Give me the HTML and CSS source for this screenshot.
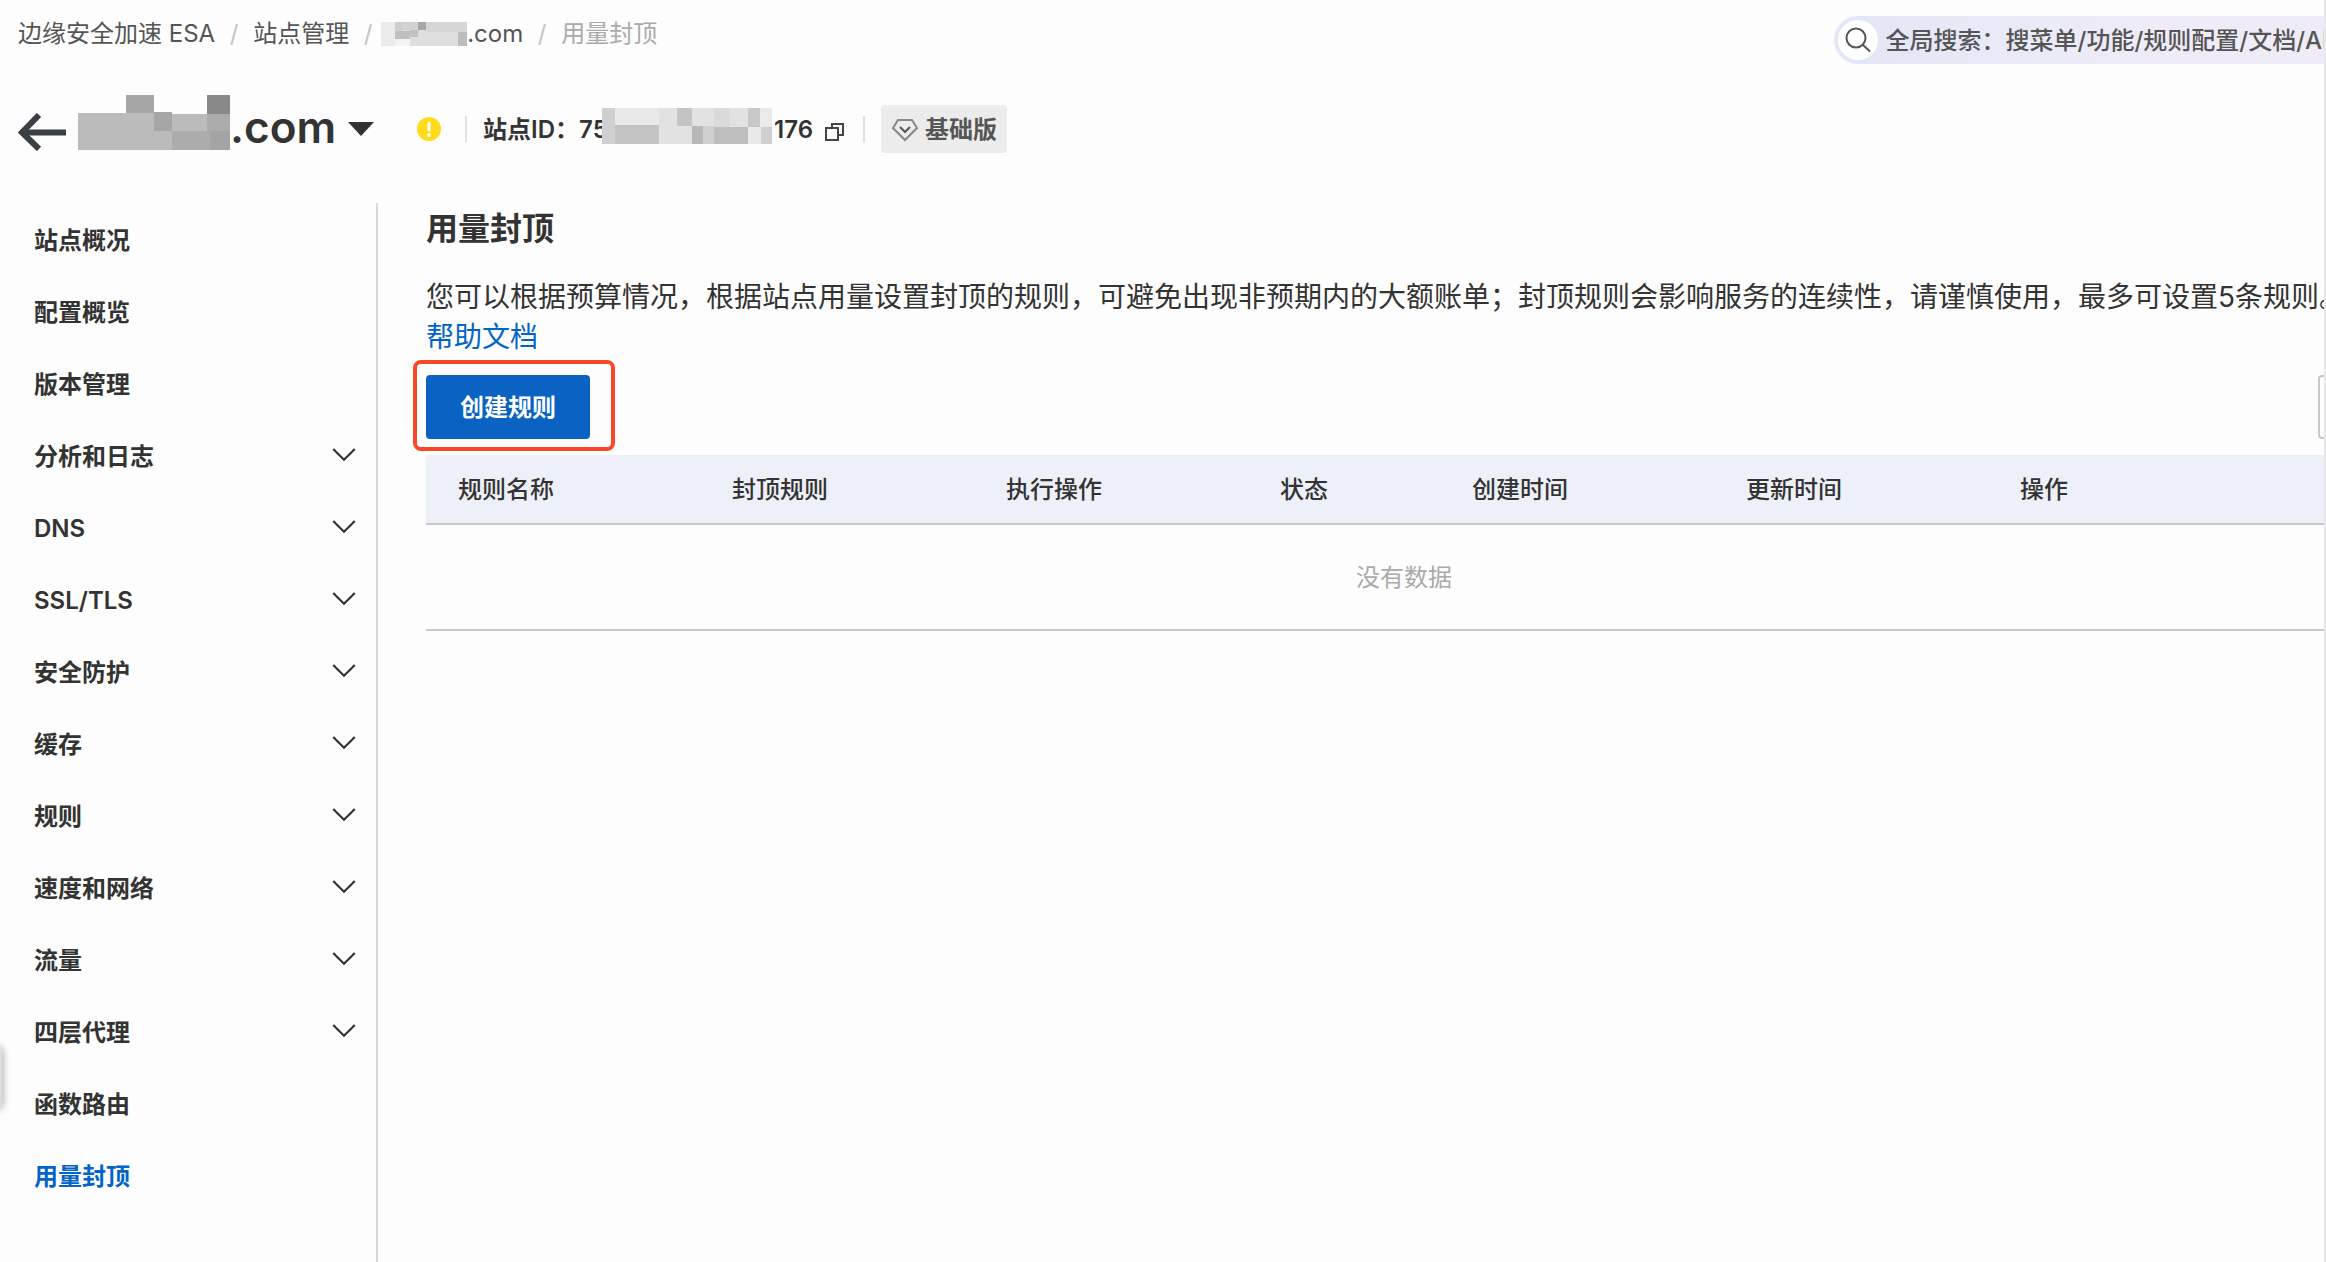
FILE: index.html
```html
<!DOCTYPE html>
<html lang="zh-CN">
<head>
<meta charset="utf-8">
<title>用量封顶</title>
<link rel="stylesheet" href="styles.css">
</head>
<body>
<div class="page">
  <header class="topbar">
    <nav class="breadcrumb" aria-label="面包屑">
      <a href="#">边缘安全加速 ESA</a>
      <span class="slash">/</span>
      <a href="#">站点管理</a>
      <span class="slash">/</span>
      <a href="#" class="masked"><svg width="86" height="24" viewBox="0 0 86 24" shape-rendering="crispEdges" aria-hidden="true"><rect width="86" height="24" fill="#dedede"/><rect width="14" height="24" fill="#ebebeb"/><rect x="14" width="7" height="9" fill="#cdcdcd"/><rect x="21" width="16" height="8" fill="#d2d2d2"/><rect x="37" width="8" height="8" fill="#a6a6a6"/><rect x="45" width="41" height="10" fill="#d6d6d6"/><rect x="14" y="9" width="15" height="8" fill="#bfbfbf"/><rect x="29" y="8" width="8" height="7" fill="#c2c2c2"/><rect x="14" y="17" width="15" height="7" fill="#f4f4f4"/><rect x="77" y="10" width="9" height="14" fill="#bdbdbd"/></svg>.com</a>
      <span class="slash">/</span>
      <span class="current" aria-current="page">用量封顶</span>
    </nav>
    <button type="button" class="search">
      <span class="search-icon"><svg width="26" height="26" viewBox="0 0 26 26" fill="none" stroke="#555" stroke-width="2"><circle cx="11" cy="11" r="9.5"/><path d="M17.5 17.5 25 24.5"/></svg></span>
      <span class="search-label">全局搜索：搜菜单/功能/规则配置/文档/API</span>
    </button>
  </header>

  <div class="site-head">
    <a href="#" class="back" aria-label="返回"><svg width="48" height="38" viewBox="0 0 48 38" fill="none" stroke="#3a4045" stroke-width="6"><path d="M3 19.500H48"/><path d="M21 2 4 19.500 21 36"/></svg></a>
    <button type="button" class="site-name">
      <svg width="152" height="55" viewBox="0 0 152 55" shape-rendering="crispEdges" aria-hidden="true"><rect y="18" width="152" height="37" fill="#bbb"/><rect x="48" width="28" height="18" fill="#a6a6a6"/><rect x="129" width="23" height="19" fill="#898989"/><rect x="76" y="17" width="18" height="19" fill="#a6a6a6"/><rect x="94" y="18" width="35" height="1" fill="#fdfdfd"/><rect x="129" y="19" width="23" height="17" fill="#acacac"/><rect x="94" y="36" width="38" height="19" fill="#acacac"/><rect x="132" y="36" width="20" height="19" fill="#a4a4a4"/></svg>
      <span class="domain">.com</span>
      <svg class="caret" width="26" height="14" viewBox="0 0 26 14" aria-hidden="true"><path d="M0 0H26L13 14Z" fill="#333"/></svg>
    </button>
    <svg class="warning" width="24" height="24" viewBox="0 0 24 24" role="img" aria-label="警告"><circle cx="12" cy="12" r="12" fill="#ffdb1a"/><path d="M12 6V13" stroke="#fff" stroke-width="3" stroke-linecap="round"/><circle cx="12" cy="18" r="2" fill="#fff"/></svg>
    <span class="divider"></span>
    <span class="site-id">站点ID：<span class="id-start">75</span><svg width="170" height="36" viewBox="0 0 170 36" shape-rendering="crispEdges" aria-hidden="true"><rect width="170" height="36" fill="#e2e2e2"/><rect width="13" height="36" fill="#cfcfcf"/><rect x="13" width="44" height="17" fill="#e9e9e9"/><rect x="13" y="17" width="44" height="19" fill="#c3c3c3"/><rect x="75" width="15" height="18" fill="#c4c4c4"/><rect x="112" width="16" height="19" fill="#dadada"/><rect x="90" y="18" width="11" height="18" fill="#b7b7b7"/><rect x="101" y="18" width="11" height="18" fill="#d0d0d0"/><rect x="112" y="19" width="34" height="17" fill="#bebebe"/><rect x="146" width="12" height="19" fill="#c8c8c8"/><rect x="146" y="19" width="13" height="17" fill="#e9e9e9"/><rect x="158" width="12" height="19" fill="#eaeaea"/><rect x="159" y="19" width="11" height="17" fill="#d0d0d0"/></svg>176</span>
    <button type="button" class="copy" aria-label="复制"><svg width="20" height="18" viewBox="0 0 20 18" fill="none" stroke="#444" stroke-width="2"><path d="M1 5H13V17H1Z"/><path d="M7 5V1H18V12H13"/></svg></button>
    <span class="divider"></span>
    <span class="plan"><svg width="28" height="24" viewBox="0 0 28 24" fill="none" stroke="#888" stroke-width="2"><path d="M7 2H21L26 10 14 22 2 10Z"/><path d="M9 9 14 14 19 9" stroke="#555"/></svg>基础版</span>
  </div>

  <div class="layout">
    <nav class="sidebar" aria-label="站点菜单">
      <a href="#">站点概况</a>
      <a href="#">配置概览</a>
      <a href="#">版本管理</a>
      <button type="button">分析和日志<svg class="chevron" viewBox="0 0 22 13"><path d="M1 1 11 11 21 1"/></svg></button>
      <button type="button">DNS<svg class="chevron" viewBox="0 0 22 13"><path d="M1 1 11 11 21 1"/></svg></button>
      <button type="button">SSL/TLS<svg class="chevron" viewBox="0 0 22 13"><path d="M1 1 11 11 21 1"/></svg></button>
      <button type="button">安全防护<svg class="chevron" viewBox="0 0 22 13"><path d="M1 1 11 11 21 1"/></svg></button>
      <button type="button">缓存<svg class="chevron" viewBox="0 0 22 13"><path d="M1 1 11 11 21 1"/></svg></button>
      <button type="button">规则<svg class="chevron" viewBox="0 0 22 13"><path d="M1 1 11 11 21 1"/></svg></button>
      <button type="button">速度和网络<svg class="chevron" viewBox="0 0 22 13"><path d="M1 1 11 11 21 1"/></svg></button>
      <button type="button">流量<svg class="chevron" viewBox="0 0 22 13"><path d="M1 1 11 11 21 1"/></svg></button>
      <button type="button">四层代理<svg class="chevron" viewBox="0 0 22 13"><path d="M1 1 11 11 21 1"/></svg></button>
      <a href="#">函数路由</a>
      <a href="#" class="active" aria-current="page">用量封顶</a>
    </nav>

    <main class="content">
      <h1>用量封顶</h1>
      <p class="intro">您可以根据预算情况，根据站点用量设置封顶的规则，可避免出现非预期内的大额账单；封顶规则会影响服务的连续性，请谨慎使用，最多可设置5条规则。<br><a href="#">帮助文档</a></p>
      <div class="toolbar">
        <div class="create-wrap">
          <button type="button" class="create">创建规则</button>
          <span class="highlight"></span>
        </div>
        <button type="button" class="refresh" aria-label="刷新"></button>
      </div>
      <table class="rules">
        <colgroup><col class="col"><col class="col"><col class="col"><col class="col-status"><col class="col"><col class="col"><col></colgroup>
        <thead>
          <tr><th>规则名称</th><th>封顶规则</th><th>执行操作</th><th>状态</th><th>创建时间</th><th>更新时间</th><th>操作</th></tr>
        </thead>
        <tbody>
          <tr><td colspan="7">没有数据</td></tr>
        </tbody>
      </table>
    </main>
  </div>
  <span class="drawer-handle"></span>
</div>
</body>
</html>
```
FILE: styles.css
```css
* {
  box-sizing: border-box;
}

body {
  margin: 0;
  background: #fdfdfd;
  color: #333;
  font-family: Inter, "Noto Sans CJK SC", sans-serif;
  font-size: 24px;
  line-height: 40px;
}

a {
  color: inherit;
  text-decoration: none;
}

button {
  margin: 0;
  padding: 0;
  border: 0;
  background: none;
  color: inherit;
  font: inherit;
  cursor: pointer;
}

svg {
  display: block;
  flex: none;
}

.page {
  position: relative;
  display: flex;
  flex-direction: column;
  min-height: 100vh;
  overflow: hidden;
  border-right: 2px solid #e8e8e8;
}

.topbar {
  display: flex;
  justify-content: space-between;
  height: 80px;
}

.breadcrumb {
  display: flex;
  align-items: center;
  height: 40px;
  margin: 14px 0 0 18px;
  color: #555;
  white-space: nowrap;
}

.slash {
  width: 38px;
  color: #c4c4c4;
  text-align: center;
}

.masked {
  display: flex;
  align-items: center;
  margin-left: -6px;
}

.current {
  color: #aaa;
}

.search {
  display: flex;
  align-items: center;
  flex: none;
  gap: 8px;
  height: 48px;
  margin: 16px -44px 0 0;
  padding: 0 24px 0 4px;
  border-radius: 24px;
  background: linear-gradient(90deg, #e3e6f6, #efecf8 60%);
  color: #555;
  font-weight: 500;
  white-space: nowrap;
}

.search-label {
  padding-top: 2px;
}

.search-icon {
  display: grid;
  place-items: center;
  width: 40px;
  height: 40px;
  border-radius: 50%;
  background: #fff;
}

.site-head {
  display: flex;
  align-items: center;
  height: 98px;
  margin-bottom: 25px;
  padding-left: 18px;
  font-weight: 600;
  white-space: nowrap;
}

.back {
  padding-top: 6px;
}

.site-name {
  display: flex;
  align-items: center;
  margin-left: 12px;
}

.site-name > svg:first-child {
  margin-bottom: 14px;
}

.domain {
  padding-bottom: 4px;
  font-size: 44px;
  font-weight: 600;
}

.caret {
  margin-left: 12px;
}

.warning {
  margin: 0 24px 0 43px;
}

.divider {
  width: 2px;
  height: 26px;
  background: #e0e0e0;
}

.site-id {
  display: flex;
  align-items: center;
  margin-left: 16px;
  padding-top: 2px;
}

.id-start {
  width: 23px;
  overflow: hidden;
}

.site-id svg {
  margin: 0 2px 8px 0;
}

.copy {
  margin: 6px 18px 0 12px;
}

.plan {
  display: flex;
  align-items: center;
  gap: 6px;
  height: 48px;
  margin-left: 16px;
  padding: 2px 10px 0;
  border-radius: 4px;
  background: #ececec;
  color: #555;
}

.layout {
  display: flex;
  flex: 1;
}

.sidebar {
  display: flex;
  flex-direction: column;
  flex: none;
  width: 378px;
  padding-top: 2px;
  border-right: 2px solid #d9d9d9;
}

.sidebar a,
.sidebar button {
  display: flex;
  align-items: center;
  justify-content: space-between;
  height: 72px;
  padding: 0 20px 0 34px;
  font-weight: 600;
  text-align: left;
}

.sidebar .active {
  color: #0064c8;
}

.chevron {
  width: 24px;
  height: 14px;
  margin-bottom: 4px;
  fill: none;
  stroke: #333;
  stroke-width: 2;
}

.content {
  flex: 1;
  min-width: 0;
  margin-right: -58px;
  padding: 2px 0 0 48px;
}

h1 {
  margin: 0;
  font-size: 32px;
  font-weight: 600;
  line-height: 48px;
}

.intro {
  margin: 24px 0 18px;
  font-size: 28px;
  line-height: 40px;
  white-space: nowrap;
}

.intro a {
  color: #0064c8;
}

.toolbar {
  display: flex;
  justify-content: space-between;
  margin-bottom: 16px;
}

.create-wrap {
  position: relative;
}

.create {
  height: 64px;
  padding: 2px 34px 0;
  border-radius: 4px;
  background: #0a62c2;
  color: #fff;
  font-weight: 600;
}

.highlight {
  position: absolute;
  inset: -15px -25px -12px -13px;
  border: 4px solid #f94829;
  border-radius: 8px;
  pointer-events: none;
}

.refresh {
  width: 64px;
  height: 64px;
  border: 2px solid #c8c8c8;
  border-radius: 4px;
}

.rules {
  width: 100%;
  border-collapse: separate;
  border-spacing: 0;
  table-layout: fixed;
}

.col {
  width: 274px;
}

.col-status {
  width: 192px;
}

.rules th {
  height: 70px;
  padding: 2px 32px 0;
  border-bottom: 2px solid #c8c8c8;
  background: #edf0f8;
  font-weight: 500;
  text-align: left;
}

.rules td {
  height: 106px;
  padding: 2px 0 0;
  border-bottom: 2px solid #c8c8c8;
  color: #aaa;
  text-align: center;
}

.drawer-handle {
  position: absolute;
  top: 1048px;
  left: -22px;
  width: 24px;
  height: 60px;
  background: #ddd;
  box-shadow: 0 0 8px rgba(0, 0, 0, 0.4);
}
```
